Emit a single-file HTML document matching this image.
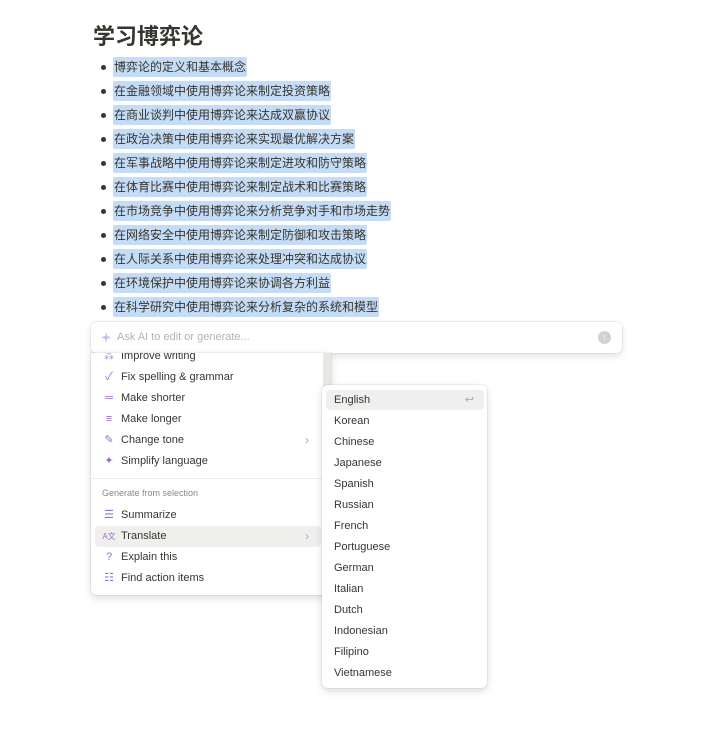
<!DOCTYPE html>
<html><head><meta charset="utf-8"><style>
*{margin:0;padding:0;box-sizing:border-box}
body{width:726px;height:737px;background:#fff;font-family:"Liberation Sans","Noto Sans CJK SC",sans-serif;color:#37352f;position:relative;overflow:hidden}
h1{position:absolute;left:93px;top:22px;font-size:22px;line-height:30px;font-weight:bold;color:#37352f;font-family:"Liberation Sans","Noto Sans CJK SC",sans-serif}
.li{position:absolute;left:101px;font-size:12px;height:20px;line-height:20px}
.li:before{content:"";position:absolute;left:0;top:8px;width:5px;height:5px;border-radius:50%;background:#37352f}
.li span{position:absolute;left:12px;white-space:nowrap;background:#c4dcf6;padding:0 1px;border-radius:2px}
.ai{position:absolute;left:91px;top:322px;width:531px;height:31px;background:#fff;border-radius:6px;box-shadow:0 0 0 1px rgba(15,15,15,.06),0 3px 8px rgba(15,15,15,.12)}
.ai .ph{position:absolute;left:26px;top:9px;font-size:11px;color:#b4b2ad}
.menu{position:absolute;left:91px;top:353px;width:240px;height:242px;background:#fff;border-radius:0 0 6px 6px;box-shadow:0 0 0 1px rgba(15,15,15,.05),0 3px 8px rgba(15,15,15,.15);overflow:hidden}
.it{position:absolute;left:4px;width:226px;height:21px;font-size:11px;line-height:21px;padding-left:26px;color:#37352f;border-radius:4px}
.ic{position:absolute;left:7px;top:0;color:#9a6dd7;font-size:11px;width:14px;text-align:center}
.ar{position:absolute;right:12px;top:0;color:#aaa;font-size:12px}
.sub{position:absolute;left:322px;top:385px;width:165px;height:303px;background:#fff;border-radius:6px;box-shadow:0 0 0 1px rgba(15,15,15,.05),0 3px 8px rgba(15,15,15,.15)}
.s{position:absolute;left:4px;width:158px;height:20px;font-size:11px;line-height:20px;padding-left:8px;border-radius:4px}
</style></head><body>
<h1>学习博弈论</h1>
<div class="li" style="top:57px"><span>博弈论的定义和基本概念</span></div>
<div class="li" style="top:81px"><span>在金融领域中使用博弈论来制定投资策略</span></div>
<div class="li" style="top:105px"><span>在商业谈判中使用博弈论来达成双赢协议</span></div>
<div class="li" style="top:129px"><span>在政治决策中使用博弈论来实现最优解决方案</span></div>
<div class="li" style="top:153px"><span>在军事战略中使用博弈论来制定进攻和防守策略</span></div>
<div class="li" style="top:177px"><span>在体育比赛中使用博弈论来制定战术和比赛策略</span></div>
<div class="li" style="top:201px"><span>在市场竞争中使用博弈论来分析竞争对手和市场走势</span></div>
<div class="li" style="top:225px"><span>在网络安全中使用博弈论来制定防御和攻击策略</span></div>
<div class="li" style="top:249px"><span>在人际关系中使用博弈论来处理冲突和达成协议</span></div>
<div class="li" style="top:273px"><span>在环境保护中使用博弈论来协调各方利益</span></div>
<div class="li" style="top:297px"><span>在科学研究中使用博弈论来分析复杂的系统和模型</span></div>

<div class="ai">
<svg style="position:absolute;left:9px;top:9px" width="12" height="13" viewBox="0 0 12 13"><path d="M6 1 L7 5 L11 6.5 L7 8 L6 12 L5 8 L1 6.5 L5 5Z" fill="#d0b8ec"/></svg>
<div class="ph">Ask AI to edit or generate...</div>
<div style="position:absolute;right:11px;top:9px;width:13px;height:13px;border-radius:50%;background:#d3d1cb;color:#fff;font-size:9px;line-height:13px;text-align:center">↑</div>
</div>

<div class="menu">
<div style="position:absolute;right:0;top:0;width:8px;height:50px;background:#e8e7e4"></div>
<div class="it" style="top:-7px"><span class="ic">⁂</span>Improve writing</div>
<div class="it" style="top:14px"><span class="ic">✓</span>Fix spelling &amp; grammar</div>
<div class="it" style="top:35px"><span class="ic">═</span>Make shorter</div>
<div class="it" style="top:56px"><span class="ic">≡</span>Make longer</div>
<div class="it" style="top:77px"><span class="ic">✎</span>Change tone<span class="ar">›</span></div>
<div class="it" style="top:98px"><span class="ic">✦</span>Simplify language</div>
<div style="position:absolute;left:0;right:0;top:125px;height:1px;background:#ededec"></div>
<div style="position:absolute;left:11px;top:135px;font-size:9px;color:#8a8984">Generate from selection</div>
<div class="it" style="top:152px"><span class="ic">☰</span>Summarize</div>
<div class="it" style="top:173px;background:#efefee"><span class="ic" style="font-size:8px">A文</span>Translate<span class="ar">›</span></div>
<div class="it" style="top:194px"><span class="ic">?</span>Explain this</div>
<div class="it" style="top:215px"><span class="ic">☷</span>Find action items</div>
</div>

<div class="sub">
<div class="s" style="top:5px;background:#efefee">English<span style="position:absolute;right:10px;color:#aaa">↩</span></div>
<div class="s" style="top:26px">Korean</div>
<div class="s" style="top:47px">Chinese</div>
<div class="s" style="top:68px">Japanese</div>
<div class="s" style="top:89px">Spanish</div>
<div class="s" style="top:110px">Russian</div>
<div class="s" style="top:131px">French</div>
<div class="s" style="top:152px">Portuguese</div>
<div class="s" style="top:173px">German</div>
<div class="s" style="top:194px">Italian</div>
<div class="s" style="top:215px">Dutch</div>
<div class="s" style="top:236px">Indonesian</div>
<div class="s" style="top:257px">Filipino</div>
<div class="s" style="top:278px">Vietnamese</div>
</div>
</body></html>
